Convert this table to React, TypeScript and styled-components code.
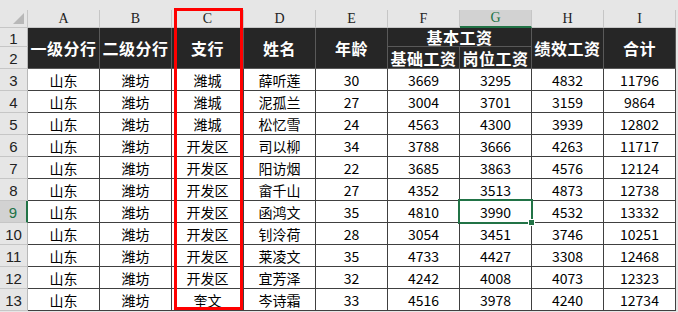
import React from 'react';
import styled, { createGlobalStyle, css } from 'styled-components';

const GlobalStyle = createGlobalStyle`
  html, body {
    margin: 0;
    padding: 0;
    background: #e6e6e6;
  }
`;

const COL_W = 72;
const ROW_H = 22;

const Sheet = styled.div`
  position: relative;
  width: 678px;
  height: 312px;
  padding-top: 10px;
  box-sizing: border-box;
  background: #e6e6e6;
  overflow: hidden;
  font-family: 'Noto Sans CJK SC', 'Liberation Sans', sans-serif;
`;

const Grid = styled.div`
  display: grid;
  grid-template-columns: 28px repeat(9, ${COL_W}px);
  grid-template-rows: 18px 19px ${ROW_H}px repeat(11, ${ROW_H}px);
  background: #fff;
  width: ${28 + COL_W * 9}px;
`;

const Corner = styled.div`
  position: relative;
  background: #e6e6e6;
  border-right: 1px solid #c6c6c6;
  border-bottom: 1px solid #c6c6c6;
  box-sizing: border-box;

  &::after {
    content: '';
    position: absolute;
    right: 3px;
    bottom: 3px;
    width: 0;
    height: 0;
    border-left: 11px solid transparent;
    border-bottom: 11px solid #b8b8b8;
  }
`;

const ColHead = styled.div<{ $active?: boolean }>`
  display: flex;
  align-items: center;
  justify-content: center;
  background: #e6e6e6;
  border-right: 1px solid #c6c6c6;
  border-bottom: 1px solid #c6c6c6;
  box-sizing: border-box;
  font-family: 'Liberation Serif', serif;
  font-size: 14px;
  color: #222;
  ${({ $active }) =>
    $active &&
    css`
      background: #d2d2d2;
      color: #217346;
      border-bottom: 2px solid #217346;
    `}
`;

const RowHead = styled.div<{ $active?: boolean; $span?: number }>`
  display: flex;
  align-items: center;
  justify-content: center;
  background: #e6e6e6;
  border-right: 1px solid #b8b8b8;
  border-bottom: 1px solid #c6c6c6;
  box-sizing: border-box;
  font-family: 'Liberation Sans', sans-serif;
  font-size: 15px;
  padding-top: 2px;
  color: #222;
  ${({ $active }) =>
    $active &&
    css`
      background: #d2d2d2;
      color: #217346;
      border-right: 2px solid #217346;
    `}
`;

const HeadCell = styled.div<{ $rows?: number; $cols?: number }>`
  display: flex;
  align-items: center;
  justify-content: center;
  grid-row: span ${({ $rows }) => $rows ?? 1};
  grid-column: span ${({ $cols }) => $cols ?? 1};
  background: #262626;
  color: #fff;
  font-weight: 700;
  font-size: 16px;
  letter-spacing: 0.5px;
  white-space: nowrap;
  border-right: 1px solid #595959;
  border-bottom: 1px solid #595959;
  box-sizing: border-box;
`;

const Cell = styled.div<{ $selected?: boolean }>`
  position: relative;
  display: flex;
  align-items: center;
  justify-content: center;
  font-size: 14px;
  color: #000;
  border-right: 1px solid #404040;
  border-bottom: 1px solid #404040;
  box-sizing: border-box;
  padding-top: 1px;
  ${({ $selected }) =>
    $selected &&
    css`
      &::after {
        content: '';
        position: absolute;
        left: -2px;
        top: -2px;
        right: -2px;
        bottom: -2px;
        border: 2px solid #217346;
        pointer-events: none;
      }
      &::before {
        content: '';
        position: absolute;
        right: -4px;
        bottom: -4px;
        width: 5px;
        height: 5px;
        background: #217346;
        border: 1px solid #fff;
        z-index: 1;
      }
    `}
`;

const Highlight = styled.div`
  position: absolute;
  left: 174px;
  top: 8px;
  width: 69px;
  height: 302px;
  border: 3px solid #ff0000;
  box-sizing: border-box;
  pointer-events: none;
`;

const columns = ['A', 'B', 'C', 'D', 'E', 'F', 'G', 'H', 'I'];

const rows: (string | number)[][] = [
  ['山东', '潍坊', '潍城', '薛听莲', 30, 3669, 3295, 4832, 11796],
  ['山东', '潍坊', '潍城', '泥孤兰', 27, 3004, 3701, 3159, 9864],
  ['山东', '潍坊', '潍城', '松忆雪', 24, 4563, 4300, 3939, 12802],
  ['山东', '潍坊', '开发区', '司以柳', 34, 3788, 3666, 4263, 11717],
  ['山东', '潍坊', '开发区', '阳访烟', 22, 3685, 3863, 4576, 12124],
  ['山东', '潍坊', '开发区', '畲千山', 27, 4352, 3513, 4873, 12738],
  ['山东', '潍坊', '开发区', '函鸿文', 35, 4810, 3990, 4532, 13332],
  ['山东', '潍坊', '开发区', '钊泠荷', 28, 3054, 3451, 3746, 10251],
  ['山东', '潍坊', '开发区', '莱凌文', 35, 4733, 4427, 3308, 12468],
  ['山东', '潍坊', '开发区', '宜芳泽', 32, 4242, 4008, 4073, 12323],
  ['山东', '潍坊', '奎文', '岑诗霜', 33, 4516, 3978, 4240, 12734],
];

const ACTIVE_ROW = 9;
const ACTIVE_COL = 6;

export default function App() {
  return (
    <>
      <GlobalStyle />
      <Sheet>
        <Grid>
          <Corner />
          {columns.map((c, i) => (
            <ColHead key={c} $active={i === ACTIVE_COL}>
              {c}
            </ColHead>
          ))}

          <RowHead>1</RowHead>
          <HeadCell $rows={2}>一级分行</HeadCell>
          <HeadCell $rows={2}>二级分行</HeadCell>
          <HeadCell $rows={2}>支行</HeadCell>
          <HeadCell $rows={2}>姓名</HeadCell>
          <HeadCell $rows={2}>年龄</HeadCell>
          <HeadCell $cols={2}>基本工资</HeadCell>
          <HeadCell $rows={2}>绩效工资</HeadCell>
          <HeadCell $rows={2}>合计</HeadCell>
          <RowHead>2</RowHead>
          <HeadCell>基础工资</HeadCell>
          <HeadCell>岗位工资</HeadCell>

          {rows.map((row, r) => {
            const num = r + 3;
            return (
              <React.Fragment key={num}>
                <RowHead $active={num === ACTIVE_ROW}>{num}</RowHead>
                {row.map((v, c) => (
                  <Cell key={c} $selected={num === ACTIVE_ROW && c === ACTIVE_COL}>
                    {v}
                  </Cell>
                ))}
              </React.Fragment>
            );
          })}
        </Grid>
        <Highlight />
      </Sheet>
    </>
  );
}
